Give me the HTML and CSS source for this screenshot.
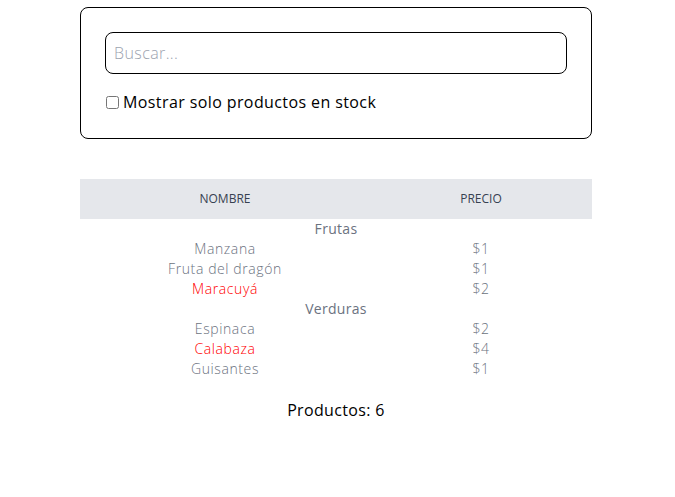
FILE: index.html
```html
<!DOCTYPE html>
<html lang="es">
<head>
<meta charset="utf-8">
<link rel="stylesheet" href="styles.css">
</head>
<body>
<main class="wrap">
  <section class="card">
    <input class="search" type="text" placeholder="Buscar...">
    <label class="stock"><input type="checkbox" class="check"> Mostrar solo productos en stock</label>
  </section>
  <table class="products">
    <thead>
      <tr><th class="col-name">Nombre</th><th>Precio</th></tr>
    </thead>
    <tbody>
      <tr class="cat"><td colspan="2">Frutas</td></tr>
      <tr><td>Manzana</td><td>$1</td></tr>
      <tr><td>Fruta del dragón</td><td>$1</td></tr>
      <tr><td class="out">Maracuyá</td><td>$2</td></tr>
      <tr class="cat"><td colspan="2">Verduras</td></tr>
      <tr><td>Espinaca</td><td>$2</td></tr>
      <tr><td class="out">Calabaza</td><td>$4</td></tr>
      <tr><td>Guisantes</td><td>$1</td></tr>
    </tbody>
  </table>
  <p class="count">Productos: 6</p>
</main>
</body>
</html>
```

FILE: styles.css
```css
* { box-sizing: border-box; }
body {
  margin: 0;
  font-family: "Open Sans", "Noto Sans", sans-serif;
  color: #000;
  background: #fff;
}
.wrap {
  width: 512px;
  margin: 7px 0 0 80px;
}
.card {
  border: 1px solid #000;
  border-radius: 8px;
  padding: 24px;
  display: flex;
  flex-direction: column;
  gap: 16px;
}
.search {
  height: 42px;
  width: 100%;
  border: 1px solid #000;
  border-radius: 8px;
  padding: 0 8px;
  font: inherit;
  font-size: 16px;
  letter-spacing: 0.4px;
  outline: none;
}
.search::placeholder { color: #9ca3af; font-weight: 300; }
.stock {
  display: flex;
  align-items: center;
  font-size: 16px;
  line-height: 24px;
  height: 24px;
  letter-spacing: 0.4px;
}
.check {
  width: 13px;
  height: 13px;
  margin: 0 4px 0 1px;
}
.products {
  width: 100%;
  margin-top: 40px;
  border-collapse: collapse;
}
.products th {
  background: #e5e7eb;
  color: #374151;
  font-size: 12px;
  line-height: 16px;
  font-weight: 500;
  text-transform: uppercase;
  padding: 12px 0;
}
.col-name { width: 290px; }
.products td {
  text-align: center;
  color: #6b7280;
  font-size: 14px;
  line-height: 20px;
  font-weight: 300;
  letter-spacing: 0.6px;
  padding: 0;
}
.products .cat td { font-weight: 500; color: #6b7280; letter-spacing: 0.3px; }
.products td.out { color: #ff0000; }
.count {
  margin: 19px 0 0;
  text-align: center;
  font-size: 16px;
  line-height: 24px;
  letter-spacing: 0.35px;
}
```
